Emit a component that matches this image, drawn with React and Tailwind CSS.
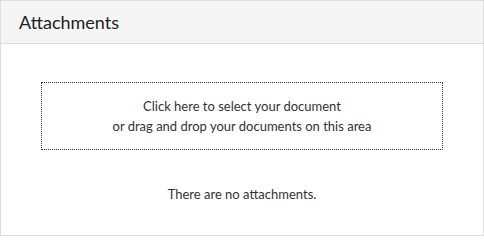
export default function App() {
  return (
    <div className="w-[484px] h-[236px] bg-white" style={{}}>
      <div className="h-full border border-[#dddddd] flex flex-col font-['Lato',sans-serif] text-[#333333]">
        <div className="h-[43px] bg-[#f5f5f5] border-b border-[#dddddd] flex items-center px-[18px] shrink-0">
          <h2 className="text-[18px] leading-none text-[#222222]">Attachments</h2>
        </div>
        <div className="flex-1 px-[40px] pt-[38px]">
          <div className="h-[68px] border border-dotted border-[#333333] flex flex-col items-center justify-center text-[13px] leading-[20px] text-center cursor-pointer">
            <span>Click here to select your document</span>
            <span>or drag and drop your documents on this area</span>
          </div>
          <p className="mt-[34px] text-center text-[13px] leading-[20px]">There are no attachments.</p>
        </div>
      </div>
    </div>
  );
}
